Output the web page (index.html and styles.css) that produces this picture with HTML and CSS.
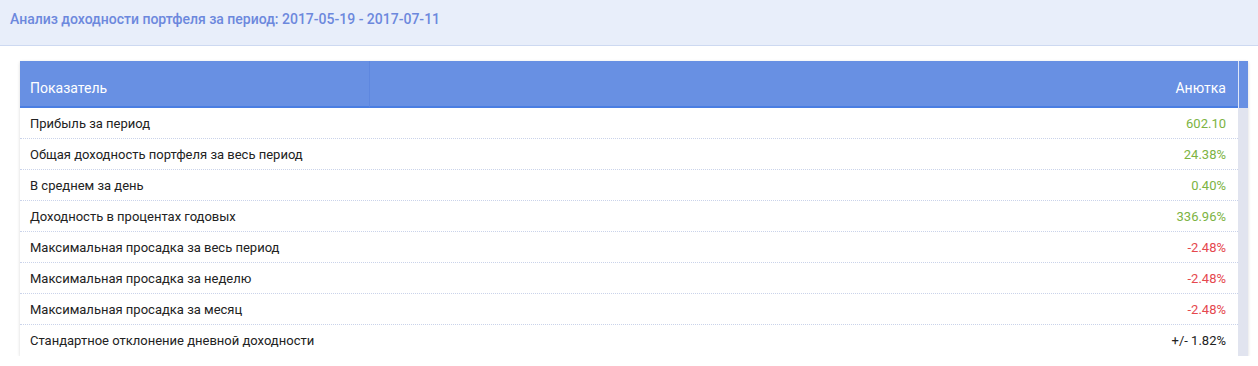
FILE: index.html
```html
<!DOCTYPE html>
<html lang="ru">
<head>
<meta charset="utf-8">
<title>Анализ доходности</title>
<link rel="stylesheet" href="styles.css">
</head>
<body>
<div class="topbar">
  <h1 class="title">Анализ доходности портфеля за период: 2017-05-19 - 2017-07-11</h1>
</div>
<div class="card">
  <div class="thead">
    <div class="th th-name">Показатель</div>
    <div class="th th-val">Анютка</div>
    <div class="gutter-head"></div>
  </div>
  <div class="tbody">
    <div class="rows">
      <div class="row"><span class="name">Прибыль за период</span><span class="val pos">602.10</span></div>
      <div class="row"><span class="name">Общая доходность портфеля за весь период</span><span class="val pos">24.38%</span></div>
      <div class="row"><span class="name">В среднем за день</span><span class="val pos">0.40%</span></div>
      <div class="row"><span class="name">Доходность в процентах годовых</span><span class="val pos">336.96%</span></div>
      <div class="row"><span class="name">Максимальная просадка за весь период</span><span class="val neg">-2.48%</span></div>
      <div class="row"><span class="name">Максимальная просадка за неделю</span><span class="val neg">-2.48%</span></div>
      <div class="row"><span class="name">Максимальная просадка за месяц</span><span class="val neg">-2.48%</span></div>
      <div class="row last"><span class="name">Стандартное отклонение дневной доходности</span><span class="val">+/- 1.82%</span></div>
    </div>
    <div class="gutter"></div>
  </div>
</div>
</body>
</html>
```
FILE: styles.css
```css
* { box-sizing: border-box; }
html, body { margin: 0; padding: 0; background: #fff; }
body { font-family: Roboto, "Noto Sans", sans-serif; color: #222; }

.topbar {
  height: 46px;
  background: #e8eefa;
  border-bottom: 1px solid #cdd9f1;
  padding: 9px 10px 0;
}
.title {
  margin: 0;
  font-size: 14px;
  font-weight: 500;
  color: #6c88dd;
  line-height: 20px;
}

.card {
  margin: 15px 10px 0 20px;
  width: 1228px;
  box-shadow: 0 1px 3px rgba(0,0,0,0.16);
  background: #fff;
}
.thead {
  display: flex;
  height: 47px;
  background: #6890e3;
}
.th {
  color: #fff;
  font-size: 14px;
  line-height: 20px;
  padding-top: 17px;
  border-bottom: 2px solid #4a7ee2;
}
.th-name {
  width: 350px;
  padding-left: 10px;
  border-right: 1px solid #5e87df;
}
.th-val {
  flex: 1;
  text-align: right;
  padding-right: 12px;
}
.gutter-head {
  width: 10px;
  border-left: 1px solid #dfe7f8;
}
.tbody { display: flex; }
.rows { flex: 1; }
.gutter { width: 10px; background: #e1e4ef; }
.row {
  display: flex;
  justify-content: space-between;
  align-items: center;
  height: 31px;
  padding: 0 12px 0 10px;
  font-size: 13px;
  border-bottom: 1px dotted #cad3ea;
}
.row.last { border-bottom: none; }
.val { color: #222; }
.val.pos { color: #7cb342; }
.val.neg { color: #e5484d; }
```
